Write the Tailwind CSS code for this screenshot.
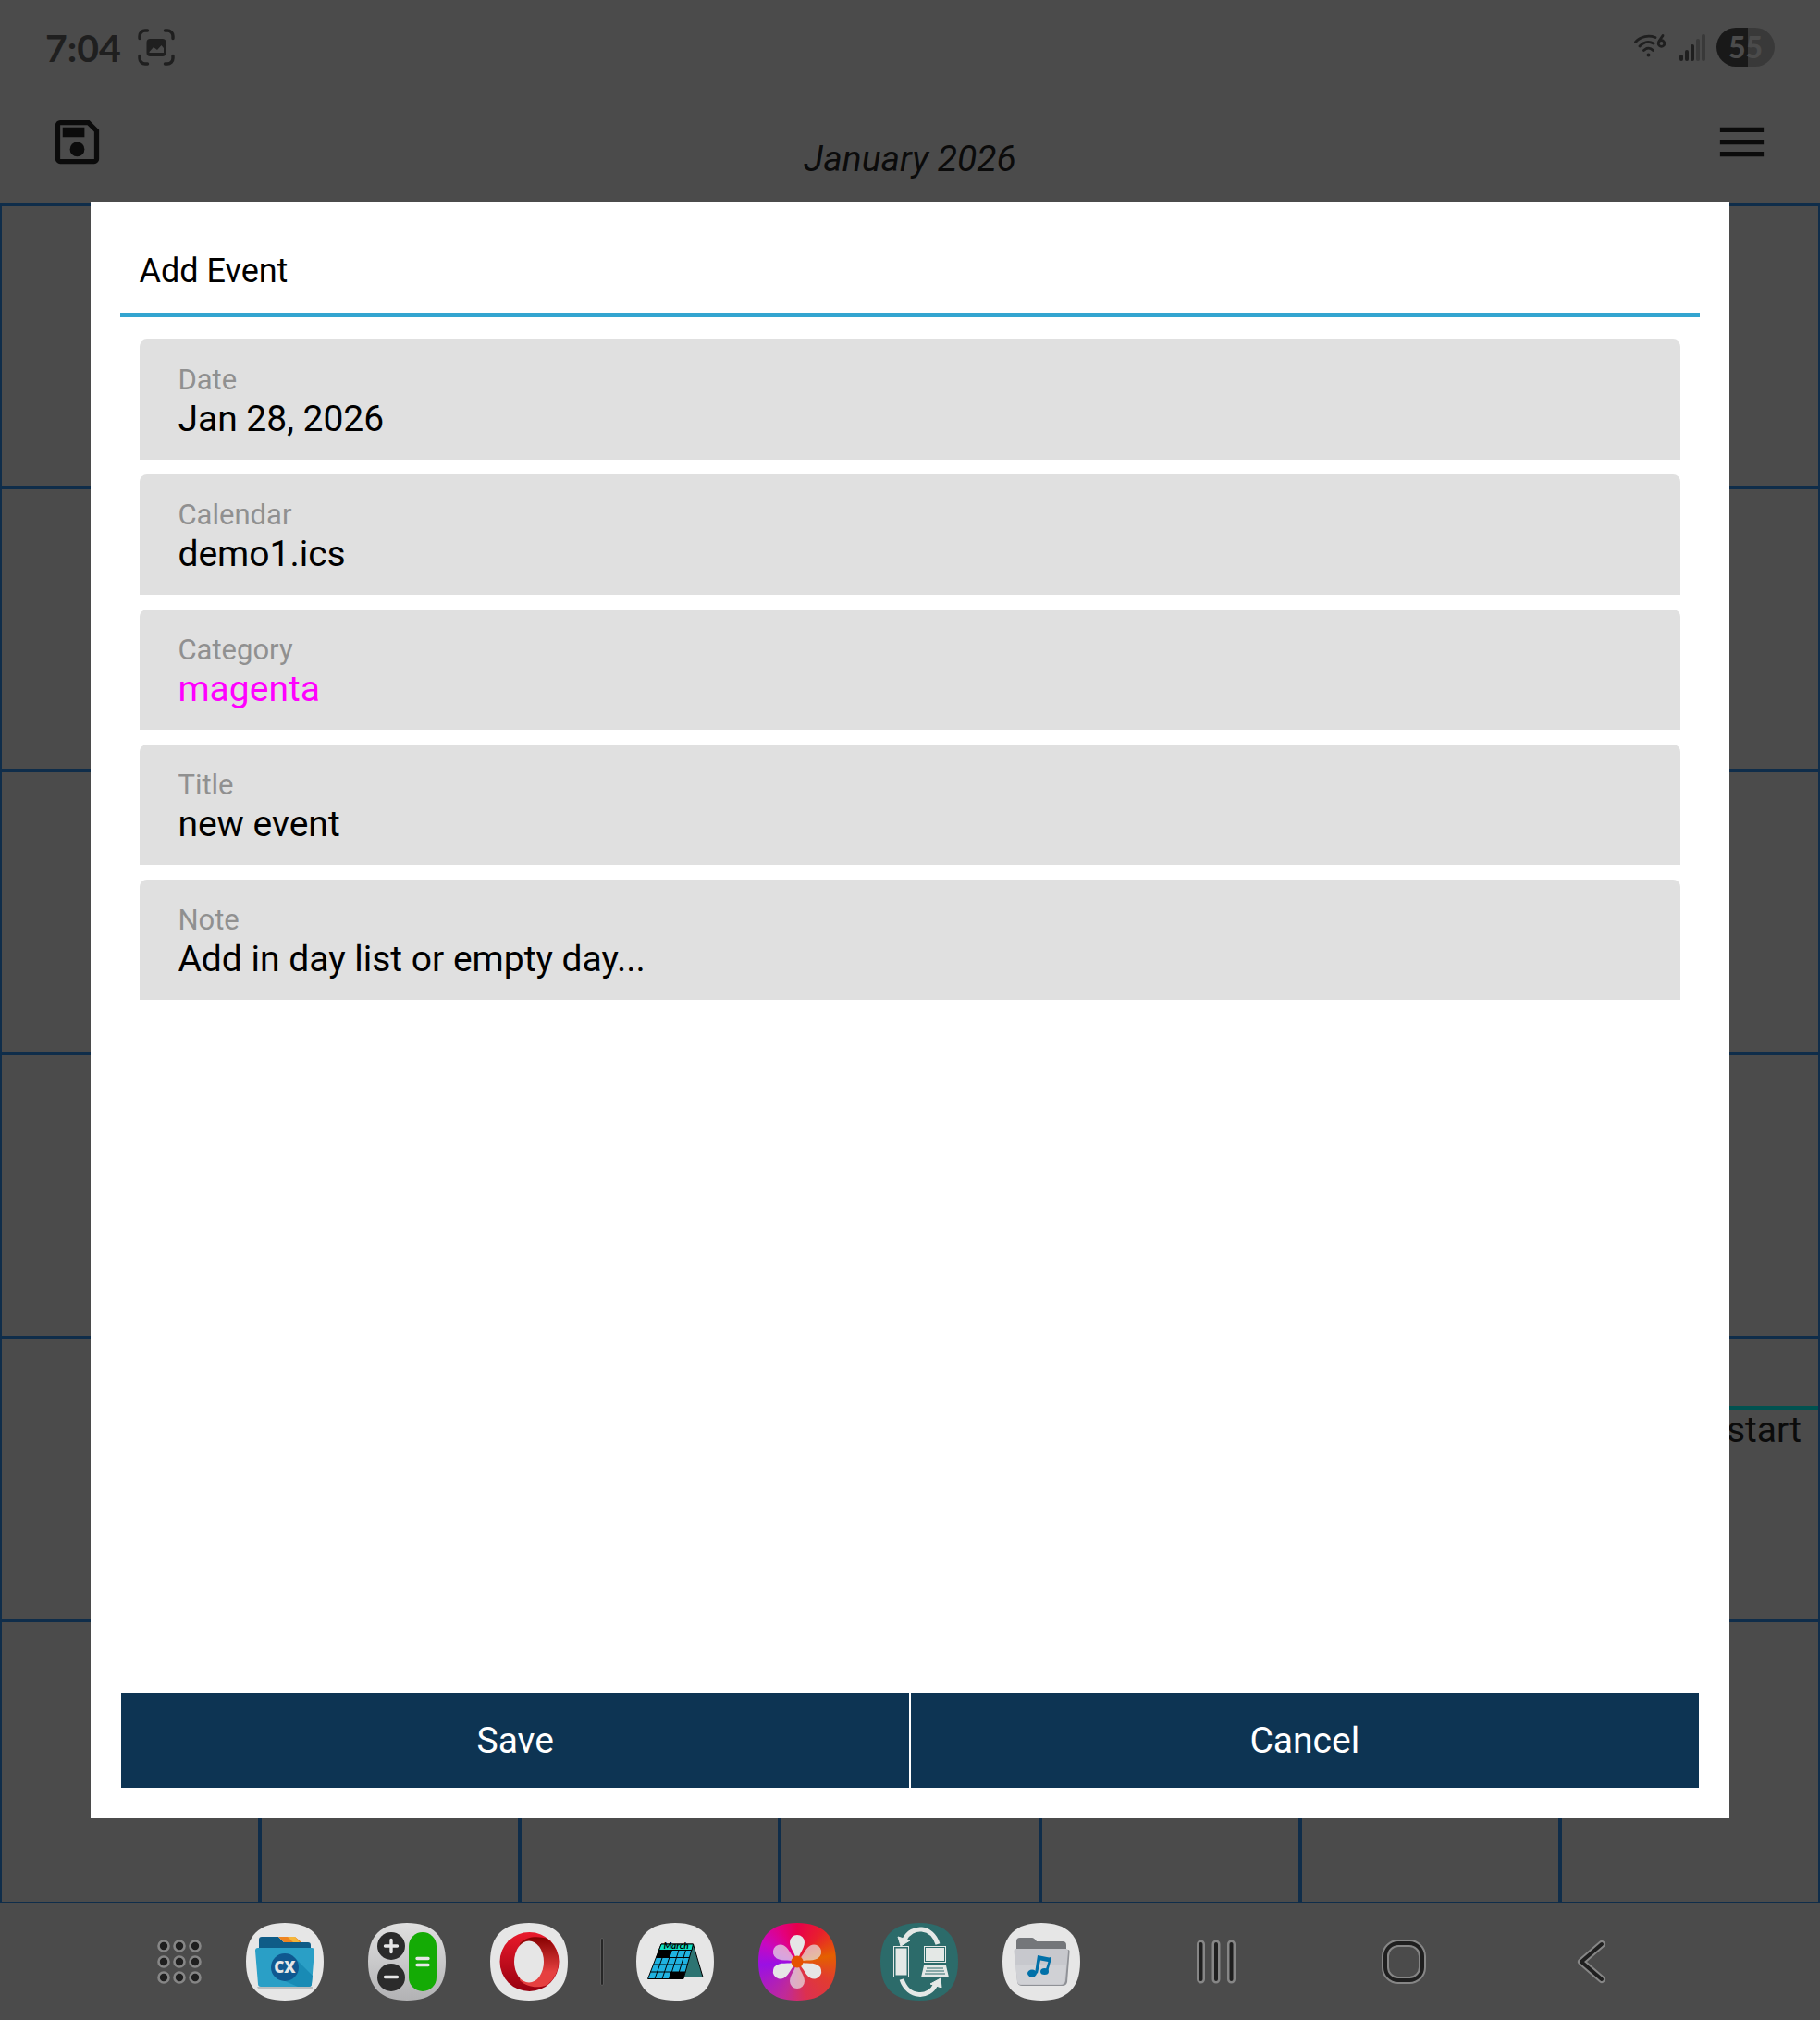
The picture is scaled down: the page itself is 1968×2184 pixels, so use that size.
<!DOCTYPE html>
<html lang="en">

<head>
    <meta charset="UTF-8">
    <meta name="viewport" content="width=device-width, initial-scale=1.0">
    <title>Calendar - Add Event</title>
    <script src="https://cdn.jsdelivr.net/npm/@tailwindcss/browser@4"></script>
</head>

<body class="min-h-screen flex flex-col bg-[#4b4b4b] text-[#0b0b0b] font-[Roboto,sans-serif]">

    <!-- status bar + toolbar -->
    <header class="h-[219px] flex flex-col">
        <div class="h-[102px] flex items-center justify-between px-[49px] text-[#1f1f1f]">
            <div class="flex items-center gap-[18px]">
                <span class="text-[41px] leading-none font-bold font-[Lato,sans-serif]">7:04</span>
                <svg class="size-10" viewBox="0 0 40 40" fill="none" stroke="currentColor" stroke-width="3.4" stroke-linecap="round">
                    <path d="M2 10.500V8a6 6 0 0 1 6-6h2.500M29.500 2H32a6 6 0 0 1 6 6v2.500M38 29.500V32a6 6 0 0 1-6 6h-2.500M10.500 38H8a6 6 0 0 1-6-6v-2.500" />
                    <rect x="9.500" y="11" width="21" height="19" rx="4" fill="currentColor" stroke="none" />
                    <path d="M12.500 26v-1l4.500-5 4 3 4.500-5 2.500 3v5z" fill="#4b4b4b" stroke="none" />
                </svg>
            </div>
            <div class="flex items-center">
                <svg class="w-9 h-[30px]" viewBox="0 0 36 30" fill="none" stroke="currentColor" stroke-width="2.800" stroke-linecap="round">
                    <path d="M3.500 9.500C9 3 18 2 25 4.500M8 14c4.500-5 10.500-5.500 15-3M12.500 18.500c3-3 7-3 10 0" />
                    <circle cx="17.500" cy="23.500" r="2" fill="currentColor" stroke="none" />
                    <path d="M33 2.500l-4 6" />
                    <circle cx="31.500" cy="11" r="3.300" />
                </svg>
                <svg class="w-7 h-[30px] ml-[15px]" viewBox="0 0 28 30" fill="currentColor">
                    <rect x="0" y="23" width="4" height="7" rx="2" />
                    <rect x="6" y="18" width="4" height="12" rx="2" />
                    <rect x="12" y="12" width="4" height="18" rx="2" />
                    <rect x="18" y="6" width="4" height="24" rx="2" fill="#393939" />
                    <rect x="24" y="1" width="4" height="29" rx="2" fill="#393939" />
                </svg>
                <span class="ml-3 w-[63px] h-[42px] rounded-full bg-linear-to-r from-[#191919] from-54% to-[#393939] to-54% flex items-center justify-center text-[32px] font-black leading-none text-[#4b4b4b] font-[Lato,sans-serif]">55</span>
            </div>
        </div>
        <div class="flex-1 flex items-start justify-between px-[52px] pt-[19px]">
            <button type="button" aria-label="Save calendar" class="size-16">
                <svg class="size-[63px]" viewBox="0 0 24 24" fill="currentColor">
                    <path fill-rule="evenodd" d="M17 3H5a2 2 0 0 0-2 2v14a2 2 0 0 0 2 2h14a2 2 0 0 0 2-2V7zM19 19H5V5h11.200L19 7.800z" />
                    <rect x="6" y="6" width="9" height="4" />
                    <circle cx="12" cy="15" r="3" />
                </svg>
            </button>
            <h1 class="pt-[25px] text-[39px] leading-[52px] italic">January 2026</h1>
            <button type="button" aria-label="Menu" class="size-16">
                <svg class="size-[63px]" viewBox="0 0 24 24" fill="currentColor">
                    <path d="M3 18h18v-2H3zM3 13h18v-2H3zM3 6v2h18V6z" />
                </svg>
            </button>
        </div>
    </header>

    <!-- month grid -->
    <main id="month" class="flex-1 grid grid-cols-7 grid-rows-6 border-t-2 border-[#0f2d4a]"></main>

    <!-- dock -->
    <footer class="h-[126px] flex items-center justify-between pl-[170px] pr-[223px]">
        <div class="flex items-center gap-12">
            <button type="button" aria-label="All apps" class="size-12">
                <svg class="size-12" viewBox="0 0 48 48" fill="#1f1f1f" stroke="#868686" stroke-width="2.600">
                    <circle cx="7" cy="7" r="5.500" /><circle cx="24" cy="7" r="5.500" /><circle cx="41" cy="7" r="5.500" />
                    <circle cx="7" cy="24" r="5.500" /><circle cx="24" cy="24" r="5.500" /><circle cx="41" cy="24" r="5.500" />
                    <circle cx="7" cy="41" r="5.500" /><circle cx="24" cy="41" r="5.500" /><circle cx="41" cy="41" r="5.500" />
                </svg>
            </button>
            <button type="button" aria-label="Files" class="size-[84px]">
                <svg class="size-[84px]" viewBox="0 0 84 84">
                    <path d="M42 0C70 0 84 14 84 42S70 84 42 84 0 70 0 42 14 0 42 0z" fill="#e6e6e6" />
                    <path d="M14 30V18q0-3 3-3h18l6 6h26q3 0 3 3v6z" fill="#0f5c87" />
                    <path d="M35 15h18l7 6H41z" fill="#ee8420" /><path d="M45 15h8l5 6h-7z" fill="#f4b53a" />
                    <path d="M12 69h60v2H13z" fill="#b9bdbf" />
                    <path d="M13 27h58q3 0 3 3l-3 36q0 3-3 3H16q-3 0-3-3L10 30q0-3 3-3z" fill="#2a9fc6" />
                    <path d="M53 38l19 19-1 9q0 3-3 3H56L33 59z" fill="#198bb5" />
                    <circle cx="42" cy="48" r="15" fill="#0f5890" />
                    <text x="42" y="54" text-anchor="middle" font-family="Open Sans, sans-serif" font-weight="800" font-size="17" fill="#e6e6e6">CX</text>
                </svg>
            </button>
            <button type="button" aria-label="Calculator" class="size-[84px]">
                <svg class="size-[84px]" viewBox="0 0 84 84" fill="none" stroke-linecap="round">
                    <defs>
                        <linearGradient id="calcBg" x1="0" y1="0" x2="0" y2="1"><stop offset="0" stop-color="#e0e0e0" /><stop offset="1" stop-color="#b2b2b4" /></linearGradient>
                    </defs>
                    <path d="M42 0C70 0 84 14 84 42S70 84 42 84 0 70 0 42 14 0 42 0z" fill="url(#calcBg)" />
                    <circle cx="25" cy="25" r="15" fill="#2b2b2b" />
                    <circle cx="25" cy="59" r="15" fill="#2b2b2b" />
                    <rect x="44" y="10" width="30" height="64" rx="15" fill="#14ab05" />
                    <path d="M18.500 25h13M25 18.500v13M18.500 58.500h13M53 38.500h12M53 45.500h12" stroke="#e6e6e6" stroke-width="3.400" />
                </svg>
            </button>
            <button type="button" aria-label="Opera" class="size-[84px]">
                <svg class="size-[84px]" viewBox="0 0 84 84">
                    <defs>
                        <linearGradient id="operaRing" x1="0" y1="0" x2="0" y2="1"><stop offset="0" stop-color="#ea1a2c" /><stop offset="1" stop-color="#97000f" /></linearGradient>
                        <linearGradient id="operaSide" x1="0" y1="0" x2="0" y2="1"><stop offset="0" stop-color="#850000" /><stop offset=".7" stop-color="#e64040" /></linearGradient>
                    </defs>
                    <path d="M42 0C70 0 84 14 84 42S70 84 42 84 0 70 0 42 14 0 42 0z" fill="#e6e6e6" />
                    <circle cx="42.500" cy="42" r="32" fill="url(#operaRing)" />
                    <path d="M32 22C40 14 52 14 62 17a32 32 0 0 1 0 50C52 71 40 70 32 62z" fill="url(#operaSide)" />
                    <ellipse cx="42" cy="42" rx="16" ry="22.500" fill="#e6e6e6" />
                </svg>
            </button>
            <span class="w-1 h-[52px] -mx-[13px] rounded-full bg-[#262626] border border-[#5a5a5a]"></span>
            <button type="button" aria-label="Month" class="size-[84px]">
                <svg class="size-[84px]" viewBox="0 0 84 84">
                    <path d="M42 0C70 0 84 14 84 42S70 84 42 84 0 70 0 42 14 0 42 0z" fill="#e6e6e6" />
                    <path d="M61.500 23L72 58.500H50z" fill="#2d7472" stroke="#000" />
                    <path d="M27 23h34.500L51 60.500H12.500z" fill="#1fb2e0" stroke="#000" />
                    <path d="M27 23h34.500L60 29.500H24.500z" fill="#0fe0c3" stroke="#000" />
                    <path d="M24 30h14l-2 8H21zM37 53h16l-2 7.500H35z" />
                    <path d="M21.500 37.500h36M18.500 45h37M15.500 53h38M31 29.500L20 60.500M38.500 29.500L28 60.500M46 29.500L36 60.500M53.500 29.500L44 60.500" fill="none" stroke="#000" stroke-width="1" />
                    <text x="43" y="28" text-anchor="middle" font-family="Lato, sans-serif" font-style="italic" font-weight="700" font-size="10">March</text>
                </svg>
            </button>
            <button type="button" aria-label="Gallery" class="size-[84px]">
                <svg class="size-[84px]" viewBox="0 0 84 84">
                    <defs>
                        <clipPath id="squircle"><path d="M42 0C70 0 84 14 84 42S70 84 42 84 0 70 0 42 14 0 42 0z" /></clipPath>
                        <path id="petal" d="M42 40C40 37 40 36 38 32 36 28 34 25 34 21a8 8 0 0 1 16 0c0 4-2 7-4 11-2 4-2 5-4 8z" />
                    </defs>
                    <foreignObject width="84" height="84" clip-path="url(#squircle)">
                        <div class="size-[84px] bg-[conic-gradient(from_0deg,#e8004c,#e8202c_40deg,#e46000_80deg,#e23c30_120deg,#dc3050_165deg,#c02a98_200deg,#9a10e4_265deg,#c808c0_300deg,#e4007c_335deg,#e8004c)]"></div>
                    </foreignObject>
                    <g fill="#e6e6e6">
                        <g fill-opacity=".7">
                            <use href="#petal" transform="rotate(60 42 42)" />
                            <use href="#petal" transform="rotate(180 42 42)" />
                            <use href="#petal" transform="rotate(300 42 42)" />
                        </g>
                        <use href="#petal" />
                        <use href="#petal" transform="rotate(120 42 42)" />
                        <use href="#petal" transform="rotate(240 42 42)" />
                    </g>
                    <circle cx="42" cy="42" r="6.500" fill="#e65000" />
                </svg>
            </button>
            <button type="button" aria-label="Device sync" class="size-[84px]">
                <svg class="size-[84px]" viewBox="0 0 84 84">
                    <path d="M42 0C70 0 84 14 84 42S70 84 42 84 0 70 0 42 14 0 42 0z" fill="#2c6b6a" />
                    <g fill="none" stroke="#e4e8e6" stroke-width="5">
                        <path d="M62 23C56 3 34 2 26 18M23 61c7 21 30 21 37 5" />
                    </g>
                    <path d="M19 15l3 10 10-6zM65 60l-11 6 12 4z" fill="#e4e8e6" stroke="#e4e8e6" stroke-width="1" />
                    <rect x="14.500" y="25.500" width="16" height="33" fill="#2c6b6a" stroke="#e4e8e6" />
                    <rect x="16.500" y="27.500" width="12" height="29" fill="#e4e8e6" />
                    <rect x="47.500" y="25.500" width="23" height="17" fill="#2c6b6a" stroke="#e4e8e6" />
                    <rect x="49" y="27" width="20" height="14" fill="#e4e8e6" />
                    <path d="M47 46h24l3 13H44z" fill="#e4e8e6" />
                    <path d="M50 49h18M49 52h20M48 55h22" stroke="#2c6b6a" />
                </svg>
            </button>
            <button type="button" aria-label="Music folder" class="size-[84px]">
                <svg class="size-[84px]" viewBox="0 0 84 84">
                    <path d="M42 0C70 0 84 14 84 42S70 84 42 84 0 70 0 42 14 0 42 0z" fill="#e6e6e6" />
                    <path d="M15 34V20q0-4 4-4h13q2 0 5 4h28q4 0 4 4v10z" fill="#74767a" />
                    <path d="M14 29h57q2 0 1.500 3L70 64q-1 4-5 4H21q-4 0-5-4z" fill="#8f9196" />
                    <path d="M14 28h55q2 0 2 3l-3 32q-1 4-5 4H20q-4 0-4-4L12.500 31q0-3 1.500-3z" fill="#c7c8cd" />
                    <path d="M14 46h55l-2 17q-1 3-4 3H20q-4 0-4-4z" fill="#d0d1d5" />
                    <path d="M38 35l15 3-1 4.500-11-2-3 14h-3z" fill="#0070a8" />
                    <path d="M51 37l2 1-4 15h-3z" fill="#0070a8" />
                    <ellipse cx="32" cy="54.500" rx="5" ry="4" fill="#0070a8" />
                    <ellipse cx="45.500" cy="52.500" rx="4.500" ry="3.500" fill="#0070a8" />
                </svg>
            </button>
        </div>
        <nav class="flex items-center gap-[155px]">
            <button type="button" aria-label="Recents" class="size-12">
                <svg class="size-12" viewBox="0 0 48 48" fill="none" stroke-linecap="round">
                    <path d="M7.500 5v38M24 5v38M40.500 5v38" stroke="#868686" stroke-width="9" />
                    <path d="M7.500 5v38M24 5v38M40.500 5v38" stroke="#1f1f1f" stroke-width="4" />
                </svg>
            </button>
            <button type="button" aria-label="Home" class="size-12">
                <svg class="size-12" viewBox="0 0 48 48" fill="none">
                    <rect x="4" y="4" width="40" height="40" rx="14" stroke="#868686" stroke-width="8" />
                    <rect x="4" y="4" width="40" height="40" rx="14" stroke="#1f1f1f" stroke-width="4" />
                </svg>
            </button>
            <button type="button" aria-label="Back" class="size-12">
                <svg class="size-12" viewBox="0 0 48 48" fill="none" stroke-linecap="round" stroke-linejoin="round">
                    <path d="M35 5L13 24l22 19" stroke="#868686" stroke-width="8" />
                    <path d="M35 5L13 24l22 19" stroke="#1f1f1f" stroke-width="4" />
                </svg>
            </button>
        </nav>
    </footer>

    <!-- add event dialog -->
    <div class="fixed inset-0 flex items-center justify-center">
        <form role="dialog" aria-labelledby="dialog-title" class="w-[90%] h-[80%] bg-white text-black p-8 flex flex-col">
            <h2 id="dialog-title" class="h-[93px] px-5 pt-5 text-4xl leading-[46px] border-b-5 border-[#33a5d0]">Add Event</h2>
            <div class="flex-1 flex flex-col gap-4 px-[21px] pt-6">
                <div class="h-[130px] rounded-t-lg bg-[#e0e0e0] px-[41px] pt-[26px] flex flex-col">
                    <label for="date" class="text-[31px] leading-9 text-[#909090]">Date</label>
                    <input id="date" type="text" value="Jan 28, 2026" class="w-full text-[39px] leading-12 outline-none">
                </div>
                <div class="h-[130px] rounded-t-lg bg-[#e0e0e0] px-[41px] pt-[26px] flex flex-col">
                    <label for="calendar" class="text-[31px] leading-9 text-[#909090]">Calendar</label>
                    <input id="calendar" type="text" value="demo1.ics" class="w-full text-[39px] leading-12 outline-none">
                </div>
                <div class="h-[130px] rounded-t-lg bg-[#e0e0e0] px-[41px] pt-[26px] flex flex-col">
                    <label for="category" class="text-[31px] leading-9 text-[#909090]">Category</label>
                    <input id="category" type="text" value="magenta" class="w-full text-[39px] leading-12 text-[#ff00ff] outline-none">
                </div>
                <div class="h-[130px] rounded-t-lg bg-[#e0e0e0] px-[41px] pt-[26px] flex flex-col">
                    <label for="title" class="text-[31px] leading-9 text-[#909090]">Title</label>
                    <input id="title" type="text" value="new event" class="w-full text-[39px] leading-12 outline-none">
                </div>
                <div class="h-[130px] rounded-t-lg bg-[#e0e0e0] px-[41px] pt-[26px] flex flex-col">
                    <label for="note" class="text-[31px] leading-9 text-[#909090]">Note</label>
                    <input id="note" type="text" value="Add in day list or empty day..." class="w-full text-[39px] leading-12 outline-none">
                </div>
            </div>
            <div class="grid grid-cols-2 gap-0.5 px-px pb-px">
                <button type="submit" class="h-[103px] pt-0.5 bg-[#0d3453] text-white text-[39px]">Save</button>
                <button type="button" class="h-[103px] pt-0.5 bg-[#0d3453] text-white text-[39px]">Cancel</button>
            </div>
        </form>
    </div>

    <script>
        // 6 weeks x 7 days, the event falls on the last day of week 5
        const month = document.getElementById('month');
        let cells = '';
        for (let i = 0; i < 42; i++) {
            const event = i === 34 ? '<p class="mt-[72px] pr-[18px] border-t-4 border-[#005250] text-right text-[39px] leading-11">start</p>' : '';
            cells += `<div class="border-2 border-[#0f2d4a]">${event}</div>`;
        }
        month.innerHTML = cells;
    </script>
</body>

</html>
